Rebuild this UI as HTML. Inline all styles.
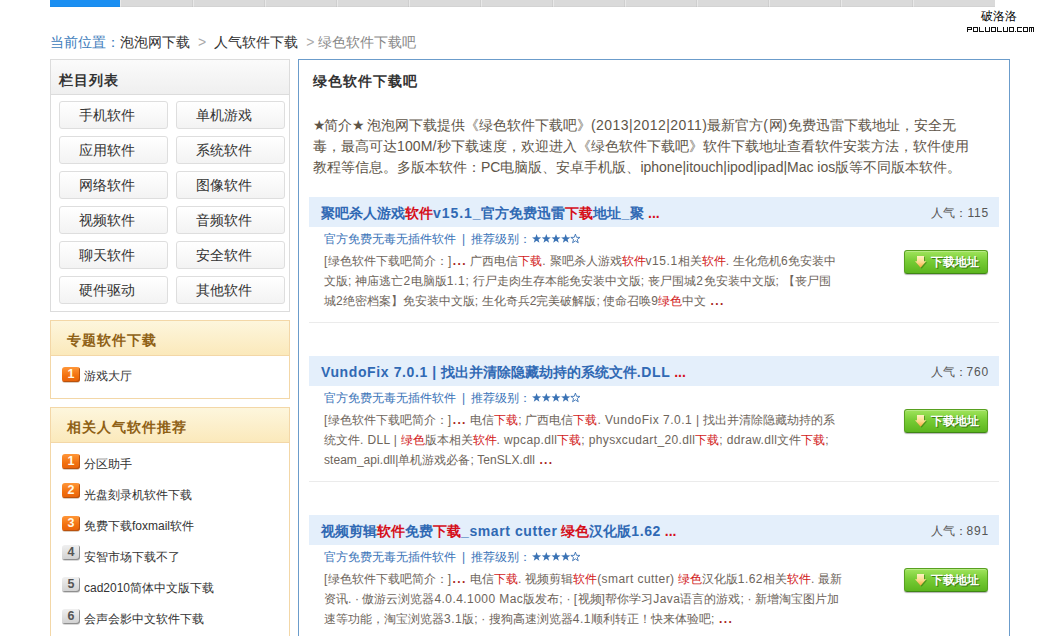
<!DOCTYPE html>
<html><head><meta charset="utf-8">
<style>
*{margin:0;padding:0;box-sizing:border-box}
html,body{width:1046px;height:636px;overflow:hidden;background:#fff}
body{font-family:"Liberation Sans",sans-serif;font-size:14px;color:#333;position:relative}
.abs{position:absolute}
.nw{white-space:nowrap}
/* top nav */
#nav{left:50px;top:0;width:945px;height:7px;background:#dadada}
#nav .on{position:absolute;left:0;top:0;width:70px;height:7px;background:#1b8ff2}
#nav i{position:absolute;top:0;width:1px;height:7px;background:#e6e6e6}
#nav .bot{position:absolute;left:0;right:0;top:6px;height:1px;background:rgba(0,0,0,.03)}
#wm1{left:981px;top:9px;font-size:12px;color:#000;line-height:14px}
#wm2{left:967px;top:27px;line-height:0}
#wm2 svg{display:block}
/* breadcrumb */
#crumb{left:50px;top:33px;line-height:18px;font-size:14px;color:#333}
#crumb .b{color:#3d7cbb}
#crumb .g{color:#888}
#crumb .s{color:#aaa;margin:0 8px}
/* left boxes */
.lbox{position:absolute;left:50px;width:240px;border:1px solid #dcdcdc;background:#fff}
.lhead{height:35px;border-bottom:1px solid #dcdcdc;background:linear-gradient(#fbfbfb,#efefef);font-weight:bold;font-size:14px;line-height:34px;padding-top:3px;padding-left:8px;color:#333;letter-spacing:1px}
.btn{position:absolute;width:109px;height:28px;border:1px solid #dedede;border-radius:3px;background:linear-gradient(#fff,#f3f3f3);text-align:left;padding-left:19px;line-height:27px;font-size:14px;color:#333}
.obox{position:absolute;left:50px;width:240px;border:1px solid #f3d7a7;background:#fff}
.ohead{height:35px;border-bottom:1px solid #f3d7a7;background:linear-gradient(#fdf6dd,#fbe9bb);font-weight:bold;font-size:14px;line-height:34px;padding-top:2px;padding-left:16px;color:#8f6116;letter-spacing:1px}
.li{position:absolute;left:84px;font-size:12px;color:#333;line-height:16px;white-space:nowrap}
.num{position:absolute;left:62px;width:18px;height:15px;border-radius:3px;font-size:12.5px;font-weight:bold;text-align:center;line-height:15px;font-family:"Liberation Sans",sans-serif}
.n1{color:#fff8e8;background:linear-gradient(#ff9638,#f2700e 60%,#e8620a);box-shadow:inset -1px -1px 0 #b9520e,0 1px 0 rgba(120,60,0,.25)}
.n2{color:#555;background:linear-gradient(#f0f0f0,#d0d0d0);box-shadow:inset -1px -1px 0 #8f8f8f,0 1px 0 rgba(0,0,0,.15)}
/* main */
#main{left:298px;top:59px;width:712px;height:600px;border:1px solid #6b9ccb;background:#fff}
#mtitle{left:313px;top:72px;font-size:14px;font-weight:bold;color:#333;line-height:18px;letter-spacing:1px}
#intro{left:313px;top:115px;font-size:14px;color:#5e5548;line-height:21px;white-space:nowrap}
.band{position:absolute;left:309px;width:690px;height:30px;background:#e4effb}
.ttl{position:absolute;left:321px;font-size:14px;font-weight:bold;color:#3069b4;line-height:18px;white-space:nowrap}
.red{color:#d5101b}
.pop{position:absolute;right:57px;font-size:12px;color:#555;line-height:16px;white-space:nowrap;margin-top:1px}
.pop b{font-weight:normal;letter-spacing:0.8px}
.sub .bar{margin:0 6px 0 6px}
.sub .st{position:absolute;left:208px;top:3px}
.sub{position:absolute;left:324px;font-size:12px;color:#3b74b8;line-height:16px;white-space:nowrap}
.desc{position:absolute;left:324px;font-size:12px;color:#6e655b;line-height:19.8px;white-space:nowrap}
.desc .r{color:#d11818}
.desc .dd{font-weight:bold;color:#a8261c;letter-spacing:1.4px;margin-left:1px}
.desc .l{letter-spacing:0.35px}
.ttl .l{letter-spacing:0.5px}
#intro .bs{letter-spacing:-2px}
#intro .l{letter-spacing:0.3px}
.dl{position:absolute;left:904px;width:84px;height:24px;border:1px solid #58a020;border-bottom-color:#3f8614;border-radius:3px;background:linear-gradient(#a0e45c,#78cc36 45%,#5cb51e);box-shadow:0 1px 1px rgba(0,0,0,.3),inset 0 1px 0 rgba(255,255,255,.25);color:#fff;font-weight:bold;font-size:12px;line-height:22px;white-space:nowrap;text-shadow:1px 1px 0 #3b7a14}
.dl span{position:absolute;left:26px;top:0}
.dl svg{position:absolute;left:10px;top:5px}
.sep{position:absolute;left:309px;width:690px;height:1px;background:#ebebeb}
#L0 .l{letter-spacing:0.467px}
#L1 .l{letter-spacing:0.140px}
#L2 .l{letter-spacing:-0.012px}
#L3 .l{letter-spacing:0.929px}
#L4 .l{letter-spacing:0.550px}
#L5 .l{letter-spacing:0.683px}
#L6 .l{letter-spacing:0.150px}
#L7 .l{letter-spacing:0.610px}
#L8 .l{letter-spacing:0.493px}
#L9 .l{letter-spacing:0.364px}
#L10 .l{letter-spacing:0.045px}
#L11 .l{letter-spacing:0.594px}
#L12 .l{letter-spacing:0.426px}
#L13 .l{letter-spacing:0.437px}
#L14 .l{letter-spacing:0.500px}
</style></head><body>
<svg width="0" height="0" style="position:absolute"><defs><linearGradient id="ag" x1="0" y1="0" x2="0" y2="1"><stop offset="0" stop-color="#fff2c0"/><stop offset=".55" stop-color="#fbd98a"/><stop offset="1" stop-color="#f5a83c"/></linearGradient></defs></svg>

<div id="nav" class="abs"><i style="left:70px;background:#eaeaea"></i><i style="left:142px;background:#cfcfcf"></i><i style="left:143px;background:#e8e8e8"></i><i style="left:214px;background:#cfcfcf"></i><i style="left:215px;background:#e8e8e8"></i><i style="left:286px;background:#cfcfcf"></i><i style="left:287px;background:#e8e8e8"></i><i style="left:358px;background:#cfcfcf"></i><i style="left:359px;background:#e8e8e8"></i><i style="left:430px;background:#cfcfcf"></i><i style="left:431px;background:#e8e8e8"></i><i style="left:502px;background:#cfcfcf"></i><i style="left:503px;background:#e8e8e8"></i><i style="left:574px;background:#cfcfcf"></i><i style="left:575px;background:#e8e8e8"></i><i style="left:646px;background:#cfcfcf"></i><i style="left:647px;background:#e8e8e8"></i><i style="left:718px;background:#cfcfcf"></i><i style="left:719px;background:#e8e8e8"></i><i style="left:790px;background:#cfcfcf"></i><i style="left:791px;background:#e8e8e8"></i><i style="left:862px;background:#cfcfcf"></i><i style="left:863px;background:#e8e8e8"></i><div class="on"></div><div class="bot"></div></div>
<div id="wm1" class="abs nw">破洛洛</div>
<div id="wm2" class="abs nw"><svg width="68" height="5" viewBox="0 0 68 5" shape-rendering="crispEdges"><path d="M0 0h1v1h-1zM1 0h1v1h-1zM2 0h1v1h-1zM3 0h1v1h-1zM4 0h1v1h-1zM0 1h1v1h-1zM4 1h1v1h-1zM0 2h1v1h-1zM1 2h1v1h-1zM2 2h1v1h-1zM3 2h1v1h-1zM4 2h1v1h-1zM0 3h1v1h-1zM0 4h1v1h-1zM6 0h1v1h-1zM7 0h1v1h-1zM8 0h1v1h-1zM9 0h1v1h-1zM10 0h1v1h-1zM6 1h1v1h-1zM10 1h1v1h-1zM6 2h1v1h-1zM10 2h1v1h-1zM6 3h1v1h-1zM10 3h1v1h-1zM6 4h1v1h-1zM7 4h1v1h-1zM8 4h1v1h-1zM9 4h1v1h-1zM10 4h1v1h-1zM12 0h1v1h-1zM12 1h1v1h-1zM12 2h1v1h-1zM12 3h1v1h-1zM12 4h1v1h-1zM13 4h1v1h-1zM14 4h1v1h-1zM15 4h1v1h-1zM16 4h1v1h-1zM18 0h1v1h-1zM22 0h1v1h-1zM18 1h1v1h-1zM22 1h1v1h-1zM18 2h1v1h-1zM22 2h1v1h-1zM18 3h1v1h-1zM22 3h1v1h-1zM18 4h1v1h-1zM19 4h1v1h-1zM20 4h1v1h-1zM21 4h1v1h-1zM22 4h1v1h-1zM24 0h1v1h-1zM25 0h1v1h-1zM26 0h1v1h-1zM27 0h1v1h-1zM28 0h1v1h-1zM24 1h1v1h-1zM28 1h1v1h-1zM24 2h1v1h-1zM28 2h1v1h-1zM24 3h1v1h-1zM28 3h1v1h-1zM24 4h1v1h-1zM25 4h1v1h-1zM26 4h1v1h-1zM27 4h1v1h-1zM28 4h1v1h-1zM30 0h1v1h-1zM30 1h1v1h-1zM30 2h1v1h-1zM30 3h1v1h-1zM30 4h1v1h-1zM31 4h1v1h-1zM32 4h1v1h-1zM33 4h1v1h-1zM34 4h1v1h-1zM36 0h1v1h-1zM40 0h1v1h-1zM36 1h1v1h-1zM40 1h1v1h-1zM36 2h1v1h-1zM40 2h1v1h-1zM36 3h1v1h-1zM40 3h1v1h-1zM36 4h1v1h-1zM37 4h1v1h-1zM38 4h1v1h-1zM39 4h1v1h-1zM40 4h1v1h-1zM42 0h1v1h-1zM43 0h1v1h-1zM44 0h1v1h-1zM45 0h1v1h-1zM46 0h1v1h-1zM42 1h1v1h-1zM46 1h1v1h-1zM42 2h1v1h-1zM46 2h1v1h-1zM42 3h1v1h-1zM46 3h1v1h-1zM42 4h1v1h-1zM43 4h1v1h-1zM44 4h1v1h-1zM45 4h1v1h-1zM46 4h1v1h-1zM48 4h1v1h-1zM50 0h1v1h-1zM51 0h1v1h-1zM52 0h1v1h-1zM53 0h1v1h-1zM54 0h1v1h-1zM50 1h1v1h-1zM50 2h1v1h-1zM50 3h1v1h-1zM50 4h1v1h-1zM51 4h1v1h-1zM52 4h1v1h-1zM53 4h1v1h-1zM54 4h1v1h-1zM56 0h1v1h-1zM57 0h1v1h-1zM58 0h1v1h-1zM59 0h1v1h-1zM60 0h1v1h-1zM56 1h1v1h-1zM60 1h1v1h-1zM56 2h1v1h-1zM60 2h1v1h-1zM56 3h1v1h-1zM60 3h1v1h-1zM56 4h1v1h-1zM57 4h1v1h-1zM58 4h1v1h-1zM59 4h1v1h-1zM60 4h1v1h-1zM62 0h1v1h-1zM63 0h1v1h-1zM64 0h1v1h-1zM65 0h1v1h-1zM66 0h1v1h-1zM62 1h1v1h-1zM64 1h1v1h-1zM66 1h1v1h-1zM62 2h1v1h-1zM64 2h1v1h-1zM66 2h1v1h-1zM62 3h1v1h-1zM64 3h1v1h-1zM66 3h1v1h-1zM62 4h1v1h-1zM64 4h1v1h-1zM66 4h1v1h-1z" fill="#111"/></svg></div>

<div id="crumb" class="abs nw"><span class="b">当前位置：</span>泡泡网下载<span class="s">&gt;</span>人气软件下载<span class="s" style="margin-right:4px">&gt;</span><span class="g">绿色软件下载吧</span></div>

<div class="lbox" style="top:59px;height:253px">
 <div class="lhead">栏目列表</div>
</div>
<div class="btn" style="left:59px;top:101px">手机软件</div>
<div class="btn" style="left:176px;top:101px">单机游戏</div>
<div class="btn" style="left:59px;top:136px">应用软件</div>
<div class="btn" style="left:176px;top:136px">系统软件</div>
<div class="btn" style="left:59px;top:171px">网络软件</div>
<div class="btn" style="left:176px;top:171px">图像软件</div>
<div class="btn" style="left:59px;top:206px">视频软件</div>
<div class="btn" style="left:176px;top:206px">音频软件</div>
<div class="btn" style="left:59px;top:241px">聊天软件</div>
<div class="btn" style="left:176px;top:241px">安全软件</div>
<div class="btn" style="left:59px;top:276px">硬件驱动</div>
<div class="btn" style="left:176px;top:276px">其他软件</div>

<div class="obox" style="top:320px;height:79px">
 <div class="ohead">专题软件下载</div>
</div>
<div class="num n1" style="top:367px">1</div><div class="li" style="top:368px">游戏大厅</div>

<div class="obox" style="top:407px;height:260px">
 <div class="ohead">相关人气软件推荐</div>
</div>
<div class="num n1" style="top:454px">1</div><div class="li" style="top:456px">分区助手</div>
<div class="num n1" style="top:483px">2</div><div class="li" style="top:487px">光盘刻录机软件下载</div>
<div class="num n1" style="top:516px">3</div><div class="li" style="top:518px">免费下载foxmail软件</div>
<div class="num n2" style="top:545px">4</div><div class="li" style="top:549px">安智市场下载不了</div>
<div class="num n2" style="top:577px">5</div><div class="li" style="top:580px">cad2010简体中文版下载</div>
<div class="num n2" style="top:609px">6</div><div class="li" style="top:611px">会声会影中文软件下载</div>

<div id="main" class="abs"></div>
<div id="mtitle" class="abs nw">绿色软件下载吧</div>
<div id="intro" class="abs"><span class="ln" id="L0"><span class="bs">★</span>简介<span class="bs">★</span> 泡泡网下载提供《绿色软件下载吧》<span class="l">(2013|2012|2011)</span>最新官方<span class="l">(</span>网<span class="l">)</span>免费迅雷下载地址，安全无</span><br><span class="ln" id="L1">毒，最高可达<span class="l">100M/</span>秒下载速度，欢迎进入《绿色软件下载吧》软件下载地址查看软件安装方法，软件使用</span><br><span class="ln" id="L2">教程等信息。多版本软件：<span class="l">PC</span>电脑版、安卓手机版、<span class="l">iphone|itouch|ipod|ipad|Mac ios</span>版等不同版本软件。</span></div>

<!-- item 1 -->
<div class="band" style="top:197px"></div>
<div class="ttl" style="top:204px"><span class="ln" id="L3">聚吧杀人游戏<span class="red">软件</span><span class="l">v15.1_</span>官方免费迅雷<span class="red">下载</span>地址<span class="l">_</span>聚 <span class="red">...</span></span></div>
<div class="pop" style="top:204px">人气：<b>115</b></div>
<div class="sub" style="top:231px">官方免费无毒无插件软件<span class="bar">|</span>推荐级别：<svg class="st" width="50" height="10" viewBox="0 0 50 10"><polygon points="4.60,0.10 5.75,3.32 9.17,3.42 6.45,5.50 7.42,8.78 4.60,6.85 1.78,8.78 2.75,5.50 0.03,3.42 3.45,3.32" fill="#3a72b4"/><polygon points="14.30,0.10 15.45,3.32 18.87,3.42 16.15,5.50 17.12,8.78 14.30,6.85 11.48,8.78 12.45,5.50 9.73,3.42 13.15,3.32" fill="#3a72b4"/><polygon points="24.00,0.10 25.15,3.32 28.57,3.42 25.85,5.50 26.82,8.78 24.00,6.85 21.18,8.78 22.15,5.50 19.43,3.42 22.85,3.32" fill="#3a72b4"/><polygon points="33.70,0.10 34.85,3.32 38.27,3.42 35.55,5.50 36.52,8.78 33.70,6.85 30.88,8.78 31.85,5.50 29.13,3.42 32.55,3.32" fill="#3a72b4"/><polygon points="43.40,0.10 44.55,3.32 47.97,3.42 45.25,5.50 46.22,8.78 43.40,6.85 40.58,8.78 41.55,5.50 38.83,3.42 42.25,3.32" fill="none" stroke="#3a72b4" stroke-width="0.9"/></svg></div>
<div class="desc" style="top:252px"><span class="ln" id="L4"><span class="l">[</span>绿色软件下载吧简介：<span class="l">]</span><span class="r dd">...</span> 广西电信<span class="r">下载</span><span class="l">.</span> 聚吧杀人游戏<span class="r">软件</span><span class="l">v15.1</span>相关<span class="r">软件</span><span class="l">.</span> 生化危机<span class="l">6</span>免安装中</span><br><span class="ln" id="L5">文版<span class="l">;</span> 神庙逃亡<span class="l">2</span>电脑版<span class="l">1.1;</span> 行尸走肉生存本能免安装中文版<span class="l">;</span> 丧尸围城<span class="l">2</span>免安装中文版<span class="l">;</span> 【丧尸围</span><br><span class="ln" id="L6">城<span class="l">2</span>绝密档案】免安装中文版<span class="l">;</span> 生化奇兵<span class="l">2</span>完美破解版<span class="l">;</span> 使命召唤<span class="l">9</span><span class="r">绿色</span>中文 <span class="r dd">...</span></span></div>
<div class="dl" style="top:250px"><svg width="14" height="14" viewBox="0 0 14 14"><path d="M3 1H10V6.3H12.2L6.6 12.7L1 6.3H3Z" fill="#2f6e0c" opacity=".55"/><path d="M2 0H9V5.3H11.2L5.6 11.7L0 5.3H2Z" fill="url(#ag)"/></svg><span>下载地址</span></div>
<div class="sep" style="top:322px"></div>

<!-- item 2 -->
<div class="band" style="top:356px"></div>
<div class="ttl" style="top:363px"><span class="ln" id="L7"><span class="l">VundoFix 7.0.1 |</span> 找出并清除隐藏劫持的系统文件<span class="l">.DLL</span> <span class="red">...</span></span></div>
<div class="pop" style="top:363px">人气：<b>760</b></div>
<div class="sub" style="top:390px">官方免费无毒无插件软件<span class="bar">|</span>推荐级别：<svg class="st" width="50" height="10" viewBox="0 0 50 10"><polygon points="4.60,0.10 5.75,3.32 9.17,3.42 6.45,5.50 7.42,8.78 4.60,6.85 1.78,8.78 2.75,5.50 0.03,3.42 3.45,3.32" fill="#3a72b4"/><polygon points="14.30,0.10 15.45,3.32 18.87,3.42 16.15,5.50 17.12,8.78 14.30,6.85 11.48,8.78 12.45,5.50 9.73,3.42 13.15,3.32" fill="#3a72b4"/><polygon points="24.00,0.10 25.15,3.32 28.57,3.42 25.85,5.50 26.82,8.78 24.00,6.85 21.18,8.78 22.15,5.50 19.43,3.42 22.85,3.32" fill="#3a72b4"/><polygon points="33.70,0.10 34.85,3.32 38.27,3.42 35.55,5.50 36.52,8.78 33.70,6.85 30.88,8.78 31.85,5.50 29.13,3.42 32.55,3.32" fill="#3a72b4"/><polygon points="43.40,0.10 44.55,3.32 47.97,3.42 45.25,5.50 46.22,8.78 43.40,6.85 40.58,8.78 41.55,5.50 38.83,3.42 42.25,3.32" fill="none" stroke="#3a72b4" stroke-width="0.9"/></svg></div>
<div class="desc" style="top:411px"><span class="ln" id="L8"><span class="l">[</span>绿色软件下载吧简介：<span class="l">]</span><span class="r dd">...</span> 电信<span class="r">下载</span><span class="l">;</span> 广西电信<span class="r">下载</span><span class="l">. VundoFix 7.0.1 |</span> 找出并清除隐藏劫持的系</span><br><span class="ln" id="L9">统文件<span class="l">. DLL |</span> <span class="r">绿色</span>版本相关<span class="r">软件</span><span class="l">. wpcap.dll</span><span class="r">下载</span><span class="l">; physxcudart_20.dll</span><span class="r">下载</span><span class="l">; ddraw.dll</span>文件<span class="r">下载</span><span class="l">;</span></span><br><span class="ln" id="L10"><span class="l">steam_api.dll|</span>单机游戏必备<span class="l">; TenSLX.dll</span> <span class="r dd">...</span></span></div>
<div class="dl" style="top:409px"><svg width="14" height="14" viewBox="0 0 14 14"><path d="M3 1H10V6.3H12.2L6.6 12.7L1 6.3H3Z" fill="#2f6e0c" opacity=".55"/><path d="M2 0H9V5.3H11.2L5.6 11.7L0 5.3H2Z" fill="url(#ag)"/></svg><span>下载地址</span></div>
<div class="sep" style="top:481px"></div>

<!-- item 3 -->
<div class="band" style="top:515px"></div>
<div class="ttl" style="top:522px"><span class="ln" id="L11">视频剪辑<span class="red">软件</span>免费<span class="red">下载</span><span class="l">_smart cutter</span> <span class="red">绿色</span>汉化版<span class="l">1.62</span> <span class="red">...</span></span></div>
<div class="pop" style="top:522px">人气：<b>891</b></div>
<div class="sub" style="top:549px">官方免费无毒无插件软件<span class="bar">|</span>推荐级别：<svg class="st" width="50" height="10" viewBox="0 0 50 10"><polygon points="4.60,0.10 5.75,3.32 9.17,3.42 6.45,5.50 7.42,8.78 4.60,6.85 1.78,8.78 2.75,5.50 0.03,3.42 3.45,3.32" fill="#3a72b4"/><polygon points="14.30,0.10 15.45,3.32 18.87,3.42 16.15,5.50 17.12,8.78 14.30,6.85 11.48,8.78 12.45,5.50 9.73,3.42 13.15,3.32" fill="#3a72b4"/><polygon points="24.00,0.10 25.15,3.32 28.57,3.42 25.85,5.50 26.82,8.78 24.00,6.85 21.18,8.78 22.15,5.50 19.43,3.42 22.85,3.32" fill="#3a72b4"/><polygon points="33.70,0.10 34.85,3.32 38.27,3.42 35.55,5.50 36.52,8.78 33.70,6.85 30.88,8.78 31.85,5.50 29.13,3.42 32.55,3.32" fill="#3a72b4"/><polygon points="43.40,0.10 44.55,3.32 47.97,3.42 45.25,5.50 46.22,8.78 43.40,6.85 40.58,8.78 41.55,5.50 38.83,3.42 42.25,3.32" fill="none" stroke="#3a72b4" stroke-width="0.9"/></svg></div>
<div class="desc" style="top:570px"><span class="ln" id="L12"><span class="l">[</span>绿色软件下载吧简介：<span class="l">]</span><span class="r dd">...</span> 电信<span class="r">下载</span><span class="l">.</span> 视频剪辑<span class="r">软件</span><span class="l">(smart cutter)</span> <span class="r">绿色</span>汉化版<span class="l">1.62</span>相关<span class="r">软件</span><span class="l">.</span> 最新</span><br><span class="ln" id="L13">资讯<span class="l">.</span> · 傲游云浏览器<span class="l">4.0.4.1000 Mac</span>版发布<span class="l">;</span> · <span class="l">[</span>视频<span class="l">]</span>帮你学习<span class="l">Java</span>语言的游戏<span class="l">;</span> · 新增淘宝图片加</span><br><span class="ln" id="L14">速等功能，淘宝浏览器<span class="l">3.1</span>版<span class="l">;</span> · 搜狗高速浏览器<span class="l">4.1</span>顺利转正！快来体验吧<span class="l">;</span> <span class="r dd">...</span></span></div>
<div class="dl" style="top:568px"><svg width="14" height="14" viewBox="0 0 14 14"><path d="M3 1H10V6.3H12.2L6.6 12.7L1 6.3H3Z" fill="#2f6e0c" opacity=".55"/><path d="M2 0H9V5.3H11.2L5.6 11.7L0 5.3H2Z" fill="url(#ag)"/></svg><span>下载地址</span></div>

</body></html>
